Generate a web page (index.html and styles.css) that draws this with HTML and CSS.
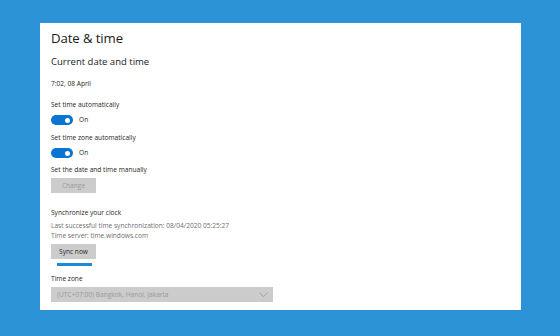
FILE: index.html
```html
<!DOCTYPE html>
<html>
<head>
<meta charset="utf-8">
<link rel="stylesheet" href="styles.css">
</head>
<body>
<div class="panel">
  <h1 class="title">Date &amp; time</h1>
  <h2 class="subtitle">Current date and time</h2>
  <div class="txt date">7:02, 08 April</div>
  <div class="txt label l1">Set time automatically</div>
  <div class="toggle-row"><span class="toggle"><span class="knob"></span></span><span class="txt">On</span></div>
  <div class="txt label l2">Set time zone automatically</div>
  <div class="toggle-row"><span class="toggle"><span class="knob"></span></span><span class="txt">On</span></div>
  <div class="txt label l3">Set the date and time manually</div>
  <div class="btn disabled">Change</div>
  <div class="txt label l4">Synchronize your clock</div>
  <div class="txt gray g1">Last successful time synchronization: 08/04/2020 05:25:27</div>
  <div class="txt gray">Time server: time.windows.com</div>
  <div class="btn sync">Sync now</div>
  <div class="underline"></div>
  <div class="txt label l5">Time zone</div>
  <div class="select">
    <span>(UTC+07:00) Bangkok, Hanoi, Jakarta</span>
    <svg width="9" height="6" viewBox="0 0 9 6"><path d="M0.5 0.8 L4.5 4.6 L8.5 0.8" fill="none" stroke="#9a9a9a" stroke-width="0.9"/></svg>
  </div>
</div>
</body>
</html>
```
FILE: styles.css
```css
html, body { margin: 0; padding: 0; }
body {
  background: #2b93d6;
  width: 560px;
  height: 336px;
  overflow: hidden;
  font-family: "Open Sans", "Noto Sans", sans-serif;
  color: #1e1e1e;
  padding-top: 23px;
  box-sizing: border-box;
}
.panel {
  margin-left: 40px;
  width: 481px;
  height: 287px;
  background: #ffffff;
  box-sizing: border-box;
  padding: 5px 0 0 11px;
  display: flex;
  flex-direction: column;
  align-items: flex-start;
}
.title {
  margin: 0;
  font-weight: 400;
  font-size: 13.2px;
  letter-spacing: -0.1px;
  line-height: 20px;
  color: #1a1a1a;
}
.subtitle {
  margin: 6px 0 0;
  font-weight: 400;
  font-size: 9.5px;
  line-height: 16px;
  color: #1a1a1a;
}
.txt {
  font-size: 6.6px;
  line-height: 10px;
  white-space: nowrap;
}
.date { margin-top: 9px; }
.l1 { margin-top: 11px; }
.l2 { margin-top: 8px; }
.l3 { margin-top: 7px; }
.l4 { margin-top: 15px; }
.l5 { margin-top: 8px; }
.g1 { margin-top: 3px; }
.gray { color: #6e6e6e; }
.toggle-row {
  margin-top: 5px;
  display: flex;
  align-items: center;
  gap: 6px;
  height: 10px;
}
.toggle {
  width: 22px;
  height: 10px;
  border-radius: 5px;
  background: #0a74d2;
  position: relative;
  display: block;
}
.knob {
  position: absolute;
  right: 3px;
  top: 2.5px;
  width: 5px;
  height: 5px;
  border-radius: 50%;
  background: #fff;
}
.btn {
  margin-top: 3px;
  width: 45px;
  height: 15px;
  background: #cccccc;
  font-size: 6.6px;
  line-height: 15px;
  text-align: center;
}
.disabled { color: #9a9a9a; }
.sync { color: #2a2a2a; }
.underline {
  margin: 4px 0 0 6px;
  width: 35px;
  height: 3px;
  background: #1e8ad6;
}
.select {
  margin-top: 3px;
  width: 222px;
  height: 15px;
  background: #cccccc;
  box-sizing: border-box;
  padding: 0 5px 0 6px;
  display: flex;
  align-items: center;
  justify-content: space-between;
  font-size: 6.6px;
  color: #9a9a9a;
}
.select svg { display: block; }
```
